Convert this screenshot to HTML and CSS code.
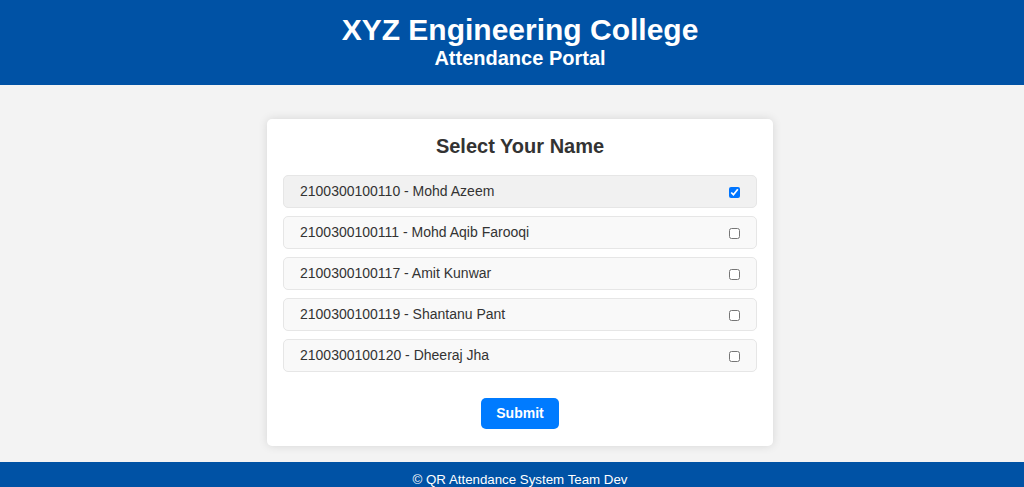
FILE: index.html
```html
<!DOCTYPE html>
<html lang="en">
<head>
    <meta charset="UTF-8">
    <meta name="viewport" content="width=device-width, initial-scale=1.0">
    <title>Attendance Portal</title>
    <link rel="stylesheet" href="styles.css">
</head>
<body>
    <header class="site-header">
        <h1>XYZ Engineering College</h1>
        <h2>Attendance Portal</h2>
    </header>

    <main class="content">
        <form class="card" id="attendanceForm">
            <h3>Select Your Name</h3>
            <ul class="student-list">
                <li class="student selected">
                    <label for="s110">2100300100110 - Mohd Azeem</label>
                    <input type="checkbox" id="s110" checked>
                </li>
                <li class="student">
                    <label for="s111">2100300100111 - Mohd Aqib Farooqi</label>
                    <input type="checkbox" id="s111">
                </li>
                <li class="student">
                    <label for="s117">2100300100117 - Amit Kunwar</label>
                    <input type="checkbox" id="s117">
                </li>
                <li class="student">
                    <label for="s119">2100300100119 - Shantanu Pant</label>
                    <input type="checkbox" id="s119">
                </li>
                <li class="student">
                    <label for="s120">2100300100120 - Dheeraj Jha</label>
                    <input type="checkbox" id="s120">
                </li>
            </ul>
            <button type="submit" class="submit-btn">Submit</button>
        </form>
    </main>

    <footer class="site-footer">&copy; QR Attendance System Team Dev</footer>
</body>
</html>
```

FILE: styles.css
```css
html {
    overflow: hidden;
}
body {
    font-family: Arial, "Liberation Sans", sans-serif;
    margin: 0;
    width: calc(100% + 16px); /* page runs a bit wider than the window */
    background: #f3f3f3;
    color: #333;
}
.site-header {
    background: #0052a5;
    color: white;
    text-align: center;
    padding: 12px 0 15px;
}
.site-header h1 {
    margin: 0;
    font-size: 30px;
    line-height: 35px;
}
.site-header h2 {
    margin: 0;
    font-size: 20px;
    line-height: 23px;
}
.content {
    display: flex;
    justify-content: center;
    padding: 34px 0 16px;
}
.card {
    width: 474px;
    background: white;
    border-radius: 5px;
    padding: 16px 16px 17px;
    box-shadow: 0 0 10px rgba(0, 0, 0, 0.12);
    display: flex;
    flex-direction: column;
    align-items: center;
}
.card h3 {
    margin: 0 0 17px;
    font-size: 20px;
    line-height: 23px;
    color: #333;
}
.student-list {
    list-style: none;
    margin: 0;
    padding: 0;
    width: 100%;
    display: flex;
    flex-direction: column;
    gap: 8px;
}
.student {
    display: flex;
    align-items: center;
    justify-content: space-between;
    padding: 7px 16px 7px 16px;
    line-height: 17px;
    font-size: 14px;
    background: #f9f9f9;
    border: 1px solid #e6e6e6;
    border-radius: 5px;
}
.student.selected {
    background: #f1f1f1;
}
.student input {
    margin: 1px 0 0 0;
    width: 11px;
    height: 11px;
}
.submit-btn {
    margin-top: 26px;
    background: #007bff;
    color: white;
    border: none;
    border-radius: 5px;
    font-family: inherit;
    font-size: 14px;
    font-weight: bold;
    line-height: 17px;
    padding: 7px 15px;
    cursor: pointer;
}
.site-footer {
    background: #0052a5;
    color: white;
    text-align: center;
    font-size: 13.3px;
    line-height: 16px;
    padding: 10px 0;
}
```
